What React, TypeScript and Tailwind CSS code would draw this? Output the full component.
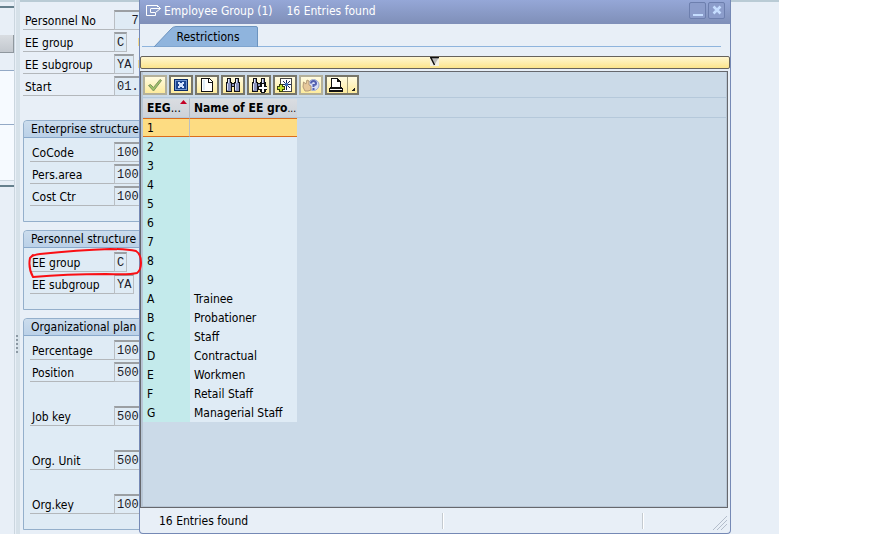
import { useState } from "react";
import type { ReactNode } from "react";

interface FieldProps {
    id: string;
    label: string;
    value: string;
    size?: "one" | "two" | "full";
    grouped?: boolean;
    marked?: boolean;
}

const ENTRIES = [
    ["1", ""], ["2", ""], ["3", ""], ["4", ""], ["5", ""], ["6", ""], ["7", ""], ["8", ""], ["9", ""],
    ["A", "Trainee"],
    ["B", "Probationer"],
    ["C", "Staff"],
    ["D", "Contractual"],
    ["E", "Workmen"],
    ["F", "Retail Staff"],
    ["G", "Managerial Staff"],
];

function Field({ id, label, value, size = "full", grouped, marked }: FieldProps) {
    const [text, setText] = useState(value);
    const width = size === "one" ? "w-[13px]" : size === "two" ? "w-5" : "w-20";

    return (
        <div className="flex h-[22px] items-end">
            <label htmlFor={id} className={`h-[22px] shrink-0 border-b border-[#b3b7bb] pl-0.5 leading-[26px] whitespace-nowrap ${grouped ? "w-[84px]" : "w-[91px]"}`}>
                {label}
            </label>
            <input
                id={id}
                value={text}
                onChange={e => setText(e.target.value)}
                className={`h-5 border border-t-2 border-[#b9bec3] border-t-[#9b9fa3] bg-[#dfebf5] pl-0.5 font-['Liberation_Mono',monospace] text-[12px] text-[#1c1c28] outline-none ${width}`}
            />
            {
                marked &&
                <span className={`mb-1.5 h-2 w-1 bg-[#f3d98c] ${size === "one" ? "ml-[11px]" : "ml-1"}`} />
            }
        </div>
    );
}

function Group({ title, children }: { title: string, children: ReactNode }) {
    return (
        <fieldset className="mb-2 w-full rounded-tl border border-[#94afcb] bg-[#dfebf5] pb-[15px] last:mb-0">
            <legend className="float-left h-[17px] w-full rounded-tl border-b border-[#8aa9cb] bg-linear-to-b from-[#cbdced] to-[#bbd1e8] pl-[7px] leading-[16px]">
                {title}
            </legend>
            <div className="clear-both pt-0.5 pl-1.5">{children}</div>
        </fieldset>
    );
}

function ToolButton({ label, wide, faded, children }: { label: string, wide?: boolean, faded?: boolean, children: ReactNode }) {
    return (
        <button
            aria-label={label}
            className={`flex h-5 cursor-pointer items-center justify-center border-2 bg-linear-to-b from-[#fffbe0] to-[#fdeb9c] ${wide ? "w-[34px]" : "w-6"} ${faded ? "border-[#b3b09a]" : "border-[#77766a]"}`}
        >
            {children}
        </button>
    );
}

function Binoculars({ plus }: { plus?: boolean }) {
    return (
        <svg className="shrink-0" width="16" height="16" viewBox="0 0 16 16" shapeRendering="crispEdges">
            <path d="M2 1h4v4h1v1h2V5h1V1h4v4h1v10H9v-5H7v5H1V5h1z" fill="#111" />
            <path d="M3 2h2v4h1v8H2V6h1zM11 2h2v4h1v8h-4V6h1zM7 7h2v2H7z" fill="#8b93bd" />
            <path d="M3 2h1v4H3zM2 7h1v6H2zM11 2h1v4h-1zM10 7h1v6h-1z" fill="#dfe5fb" />
            {plus && <path d="M10 6h3v3h3v3h-3v3h-3v-3H7V9h3z" fill="#fff" stroke="#111" />}
        </svg>
    );
}

function Toolbar() {
    return (
        <div className="flex h-[26px] gap-0.5 border-b border-[#b5c8da] pt-[3px]">
            <ToolButton label="Copy" faded>
                <svg width="16" height="14" viewBox="0 0 16 14">
                    <path d="M1.500 7.500l2-1 3 3 6.500-8 1.500 1-8 10.500z" fill="#9fc267" stroke="#7f9460" />
                </svg>
            </ToolButton>
            <ToolButton label="Close">
                <svg width="14" height="12" viewBox="0 0 14 12" shapeRendering="crispEdges">
                    <path d="M0 0h14v12H0z" fill="#0b2a66" />
                    <path d="M1 1h12v10H1z" fill="#6f95d1" />
                    <path d="M2 2h10v8H2z" fill="#1c4690" />
                    <path d="M4 3h2v1h2V3h2v2H9v2h1v2H8V8H6v1H4V7h1V5H4z" fill="#d5e5ff" />
                </svg>
            </ToolButton>
            <ToolButton label="New Selection">
                <svg width="12" height="14" viewBox="0 0 12 14" shapeRendering="crispEdges">
                    <path d="M0 0h9v1h1v1h1v1h1v11H0z" fill="#111" />
                    <path d="M1 1h6v4h4v8H1z" fill="#fff" />
                    <path d="M8 1h1v1h1v1h1v1H8z" fill="#fff" />
                    <path d="M2 2h2v10H2z" fill="#e0eefa" />
                </svg>
            </ToolButton>
            <ToolButton label="Find"><Binoculars /></ToolButton>
            <ToolButton label="Find Next"><Binoculars plus /></ToolButton>
            <ToolButton label="Insert in Personal List">
                <svg width="16" height="14" viewBox="0 0 16 14" shapeRendering="crispEdges">
                    <path d="M3 0h12v14H3z" fill="#444" />
                    <path d="M4 1h10v12H4z" fill="#fff" />
                    <path d="M9 2h1v10H9zM5 6h9v1H5zM6 3h1v1H6zM7 4h1v1H7zM12 3h1v1h-1zM11 4h1v1h-1zM7 8h1v1H7zM6 9h1v1H6zM11 8h1v1h-1zM12 9h1v1h-1z" fill="#16295d" />
                    <path d="M8 5h3v3H8z" fill="#3e70b8" />
                    <path d="M2 6h4v2h2v4H6v2H2v-2H0V8h2z" fill="#38450b" />
                    <path d="M3 7h2v2h2v2H5v2H3v-2H1V9h2z" fill="#c3de35" />
                </svg>
            </ToolButton>
            <ToolButton label="Help" faded>
                <svg width="18" height="16" viewBox="0 0 18 16">
                    <circle cx="11.5" cy="8" r="5.5" fill="#d9dff5" stroke="#9ca8cf" />
                    <path d="M1.500 5l2.500 2 1-4 2 1v4l2 1v4l-3 1H3l-2-4z" fill="#e6c89b" stroke="#b39b78" />
                    <path d="M9 6.500Q9 4 11.500 4T14 6.500Q14 8 11.500 8v2M11.500 11v2" fill="none" stroke="#5360b0" strokeWidth="2" />
                </svg>
            </ToolButton>
            <ToolButton label="Print" wide>
                <svg width="30" height="16" viewBox="0 0 30 16" shapeRendering="crispEdges">
                    <path d="M4 1h7v1h1v1h1v1h1v6h1v1h1v4H2v-4h1v-1h1z" fill="#111" />
                    <path d="M5 2h5v3h3v5H5zM3 12h12v1H3z" fill="#fff" />
                    <path d="M20 0h1v16h-1z" fill="#a29b78" />
                    <path d="M28 10v4h-4z" fill="#222" />
                </svg>
            </ToolButton>
        </div>
    );
}

function EntryTable() {
    const [selected, setSelected] = useState("1");

    return (
        <table className="w-full table-fixed border-separate border-spacing-0 text-left">
            <colgroup>
                <col className="w-[47px]" />
                <col className="w-[107px]" />
                <col />
            </colgroup>
            <thead>
                <tr className="h-5 leading-[17px]">
                    <th className="relative border-t border-r border-b border-t-[#cbdae8] border-r-[#aeb9c5] border-b-[#b5c8da] bg-linear-to-b from-[#dadde1] to-[#cdd2d9] p-0 pt-px pl-1">
                        EEG<span className="font-normal">...</span>
                        <svg className="absolute top-0 right-0.5" width="7" height="5" viewBox="0 0 7 5"><path d="M0 5L3.500 1L7 5z" fill="#c40026" /></svg>
                    </th>
                    <th className="border-t border-b border-t-[#cbdae8] border-b-[#b5c8da] bg-linear-to-b from-[#dadde1] to-[#cdd2d9] p-0 pt-px pl-1 whitespace-nowrap">
                        Name of EE gro<span className="text-[10px] font-normal">...</span>
                    </th>
                    <td className="border-b border-[#b5c8da] p-0" />
                </tr>
            </thead>
            <tbody>
                {ENTRIES.map(([key, name]) => {
                    const active = key === selected;
                    return (
                        <tr key={key} onClick={() => setSelected(key)} className="h-[19px]">
                            <td className={`h-[19px] p-0 pl-1 ${active ? "border-y border-r border-y-[#dc6d1d] border-r-[#b9bfc4] bg-[#fddc82] pt-px leading-[16px]" : "bg-[#c3eaeb] pt-0.5 leading-[17px]"}`}>
                                {key}
                            </td>
                            <td className={`h-[19px] p-0 pl-1 whitespace-nowrap ${active ? "border-y border-[#dc6d1d] bg-[#fddc82] pt-px leading-[16px]" : "bg-[#dfebf5] pt-0.5 leading-[17px]"}`}>
                                {name}
                            </td>
                        </tr>
                    );
                })}
            </tbody>
        </table>
    );
}

function Dialog() {
    return (
        <section role="dialog" aria-label="Employee Group" className="absolute top-0 right-0 bottom-0 left-[139px] mr-12 flex flex-col rounded-b border border-t-0 border-[#7589b5] bg-[#e8eff7]">
            <header className="flex h-6 shrink-0 items-center bg-linear-to-b from-[#95a7d7] to-[#7f8fb8] pr-[5px] pl-[5px] text-white">
                <svg className="mb-1 shrink-0" width="18" height="14" viewBox="0 0 18 14" fill="none" stroke="#fff">
                    <path d="M12.500 4V2.500H1.500v10h9V10M6 5.500h9.500L10.500 9.500H5.500v-4M12.500 2.500L15.500 5.500" />
                </svg>
                <h1 className="mb-0.5 flex flex-1 gap-3.5 pl-px leading-[20px] whitespace-nowrap">
                    <span>Employee Group (1)</span>
                    <span>16 Entries found</span>
                </h1>
                <div className="mb-1 flex gap-0.5">
                    <button aria-label="Minimize" className="flex h-[17px] w-[17px] items-end justify-center rounded-xs border border-[#6d7fae] bg-[#8c9dcb] pb-0.5">
                        <span className="h-0.5 w-2.5 bg-[#c5ddff]" />
                    </button>
                    <button aria-label="Close window" className="flex h-[17px] w-[17px] items-center justify-center rounded-xs border border-[#6d7fae] bg-[#8c9dcb]">
                        <svg width="10" height="10" viewBox="0 0 10 10"><path d="M1.500 1.500l7 7M8.500 1.500l-7 7" stroke="#c5ddff" strokeWidth="2.500" /></svg>
                    </button>
                </div>
            </header>
            <div className="h-8 shrink-0 pt-0.5 pr-[9px] pl-0.5">
                <div className="h-[21px] border-b border-[#8eb4dd] pl-3">
                    <button className="relative h-[21px] w-[104px] pl-1 leading-[22px]">
                        <svg className="absolute inset-0" width="104" height="21" viewBox="0 0 104 21">
                            <path d="M0 21L17 3Q19 .5 22 .5H102Q103.500 .5 103.500 2V21z" fill="#8fb4dd" stroke="#6c94bf" />
                        </svg>
                        <span className="relative">Restrictions</span>
                    </button>
                </div>
            </div>
            <button aria-label="Show restrictions" className="flex h-[13px] w-full shrink-0 items-start justify-center rounded-xs border border-[#66625c] bg-linear-to-b from-[#fff6cf] to-[#fbe48b] pr-0.5">
                <svg width="9" height="9" viewBox="0 0 9 9">
                    <path d="M0 0h9v9H0z" fill="#f3f0e4" />
                    <path d="M.5 1h8L4.500 8z" fill="#b9b9b9" />
                    <path d="M0 .5h9M1 1l3.500 7" stroke="#111" strokeWidth="1.500" />
                </svg>
            </button>
            <div className="mt-0.5 mr-0.5 flex flex-1 border border-[#66686d] bg-[#b8c6d5] pr-px pb-px pl-0.5">
                <div className="flex-1 bg-[#cbdae8]">
                    <Toolbar />
                    <EntryTable />
                </div>
            </div>
            <footer className="flex h-[25px] shrink-0 items-center pl-[19px]">
                <output className="flex-1">16 Entries found</output>
                <span className="mr-[198px] h-4 w-0.5 border-r border-white bg-[#c4cad0]" />
                <span className="mr-[69px] h-4 w-0.5 border-r border-white bg-[#c4cad0]" />
                <svg className="mr-0.5 self-end" width="15" height="21" viewBox="0 0 15 21" stroke="#b3bdcb" fill="none">
                    <path d="M0 18L14 4M4 18L14 8M8 18l6-6" />
                </svg>
            </footer>
        </section>
    );
}

export default function App() {
    return (
        <div className="min-h-screen overflow-hidden bg-white pr-[101px] font-['DejaVu_Sans_Condensed','Noto_Sans',sans-serif] text-[12px] text-black">
            <main className="relative flex min-h-screen bg-[#e8eff7]">
                <aside className="w-[15px] shrink-0 border-t-2 border-r border-t-[#c3d3dc] border-r-[#cbd6df] pt-1">
                    <div className="h-[175px] border-t-2 border-b border-t-[#66808d] border-b-[#cbd6df] bg-[#f6faff]">
                        <div className="h-[27px] bg-[#e8eff7]" />
                        <div className="h-[18px] border-r border-b border-[#8f979e] bg-linear-to-b from-[#d9dde2] to-[#c3c8ce]" />
                        <div className="h-[18px] border-b border-[#93a9c6] bg-[#e8eff7]" />
                        <div className="h-[54px] border-b border-[#93a9c6]" />
                    </div>
                    <div className="mt-1 h-0.5 bg-[#66808d]" />
                </aside>
                <div className="flex w-[5px] shrink-0 items-start border-l border-[#e8eff7] bg-[#d6e1e9] pt-[335px]">
                    <svg width="3" height="18" viewBox="0 0 3 18"><path d="M1 0v18" stroke="#8b98a3" strokeWidth="2" strokeDasharray="2 2" /></svg>
                </div>
                <form className="flex-1 border-t-2 border-[#b9cbd5] pr-24 pl-[3px]" onSubmit={e => e.preventDefault()}>
                    <div className="pt-1.5 pb-6">
                        <Field id="pernr" label="Personnel No" value="  7" />
                        <Field marked id="group" label="EE group" value="C" size="one" />
                        <Field marked id="subgroup" label="EE subgroup" value="YA" size="two" />
                        <Field id="start" label="Start" value="01." />
                    </div>
                    <Group title="Enterprise structure">
                        <Field grouped id="cocode" label="CoCode" value="100" />
                        <Field grouped id="area" label="Pers.area" value="100" />
                        <Field grouped id="cost" label="Cost Ctr" value="100" />
                    </Group>
                    <Group title="Personnel structure">
                        <Field grouped id="ps-group" label="EE group" value="C" size="one" />
                        <Field grouped id="ps-subgroup" label="EE subgroup" value="YA" size="two" />
                    </Group>
                    <Group title="Organizational plan">
                        <Field grouped id="percentage" label="Percentage" value="100" />
                        <Field grouped id="position" label="Position" value="500" />
                        <div className="mt-[22px]"><Field grouped id="job" label="Job key" value="500" /></div>
                        <div className="mt-[22px]"><Field grouped id="unit" label="Org. Unit" value="500" /></div>
                        <div className="mt-[22px]"><Field grouped id="orgkey" label="Org.key" value="100" /></div>
                    </Group>
                </form>
                <Dialog />
                {/* pen mark round the EE group field */}
                <svg className="pointer-events-none absolute top-[246px] left-[26px]" width="118" height="34" viewBox="0 0 118 34" fill="none" stroke="#fa0f14" strokeWidth="2" strokeLinecap="round">
                    <path d="M4 12Q6 9 14 8Q52 4 84 3Q101 3 110 5Q115 8 115 17Q115 24 111 27Q104 29 80 28Q40 28 7 31Q2 22 4 12L7 9" />
                </svg>
            </main>
        </div>
    );
}
